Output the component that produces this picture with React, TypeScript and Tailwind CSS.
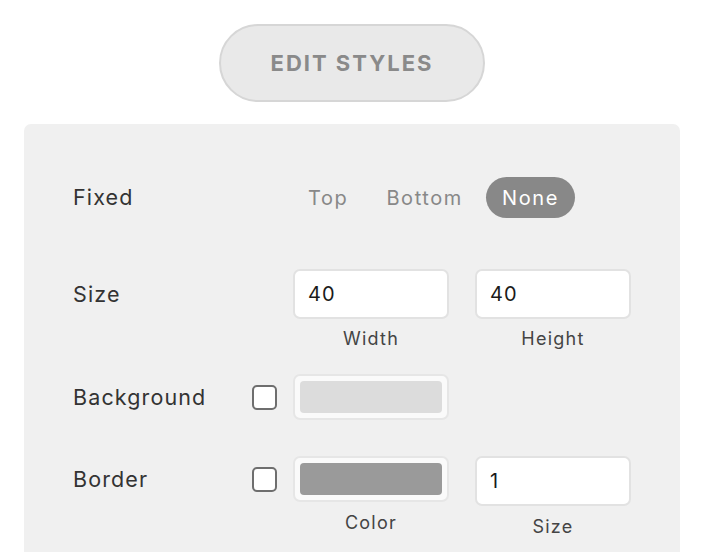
const font = { fontFamily: "Inter, 'Noto Sans', sans-serif" };

function Checkbox() {
	return <div className="w-[25px] h-[25px] rounded-[5px] border-2 border-[#6e6e6e] bg-white" />;
}

function TextBox({ value }: { value: string }) {
	return (
		<div className="w-[156px] h-[50px] rounded-[7px] border-2 border-[#e2e2e2] bg-white flex items-center px-[13px] text-[20px] tracking-[0.05em] text-[#1a1a1a]">
			{value}
		</div>
	);
}

function Swatch({ color }: { color: string }) {
	return (
		<div className="w-[156px] h-[46px] rounded-[7px] border-2 border-[#e6e6e6] bg-[#fafafa] p-[5px]">
			<div className={`w-full h-full rounded-[4px] ${color}`} />
		</div>
	);
}

function Caption({ children, className = "" }: { children: string; className?: string }) {
	return <div className={`text-center text-[18px] tracking-[0.07em] text-[#444] ${className}`}>{children}</div>;
}

export default function App() {
	return (
		<div className="w-[712px] h-[552px] bg-white overflow-hidden" style={font}>
			<div className="pt-[24px] pl-[219px]">
				<button className="w-[266px] h-[78px] rounded-full border-2 border-[#d6d6d6] bg-[#e9e9e9] text-[22px] font-bold tracking-[2px] text-[#8a8a8a]">
					EDIT STYLES
				</button>
			</div>

			<div className="mt-[22px] ml-[24px] w-[656px] h-[460px] rounded-t-[7px] bg-[#f0f0f0] pl-[49px] pt-[53px] tracking-[0.07em]">
				{/* Fixed */}
				<div className="flex items-center h-[41px]">
					<div className="w-[220px] text-[21.5px] text-[#333]">Fixed</div>
					<div className="flex items-center text-[20px] tracking-[0.08em] text-[#888]">
						<span className="ml-[15px]">Top</span>
						<span className="ml-[38px]">Bottom</span>
						<span className="ml-[23px] h-[41px] px-[16px] rounded-full bg-[#888] text-white flex items-center">None</span>
					</div>
				</div>

				{/* Size */}
				<div className="flex items-start mt-[51px]">
					<div className="w-[220px] h-[50px] flex items-center text-[21.5px] text-[#333]">Size</div>
					<div>
						<TextBox value="40" />
						<Caption className="mt-[6px]">Width</Caption>
					</div>
					<div className="ml-[26px]">
						<TextBox value="40" />
						<Caption className="mt-[6px]">Height</Caption>
					</div>
				</div>

				{/* Background */}
				<div className="flex items-center mt-[22px]">
					<div className="w-[179px] text-[21.5px] text-[#333]">Background</div>
					<div className="w-[41px]">
						<Checkbox />
					</div>
					<Swatch color="bg-[#dcdcdc]" />
				</div>

				{/* Border */}
				<div className="flex items-start mt-[36px]">
					<div className="w-[179px] h-[46px] flex items-center text-[21.5px] text-[#333]">Border</div>
					<div className="w-[41px] h-[46px] flex items-center">
						<Checkbox />
					</div>
					<div>
						<Swatch color="bg-[#9a9a9a]" />
						<Caption className="mt-[7px]">Color</Caption>
					</div>
					<div className="ml-[26px]">
						<TextBox value="1" />
						<Caption className="mt-[7px]">Size</Caption>
					</div>
				</div>
			</div>
		</div>
	);
}
